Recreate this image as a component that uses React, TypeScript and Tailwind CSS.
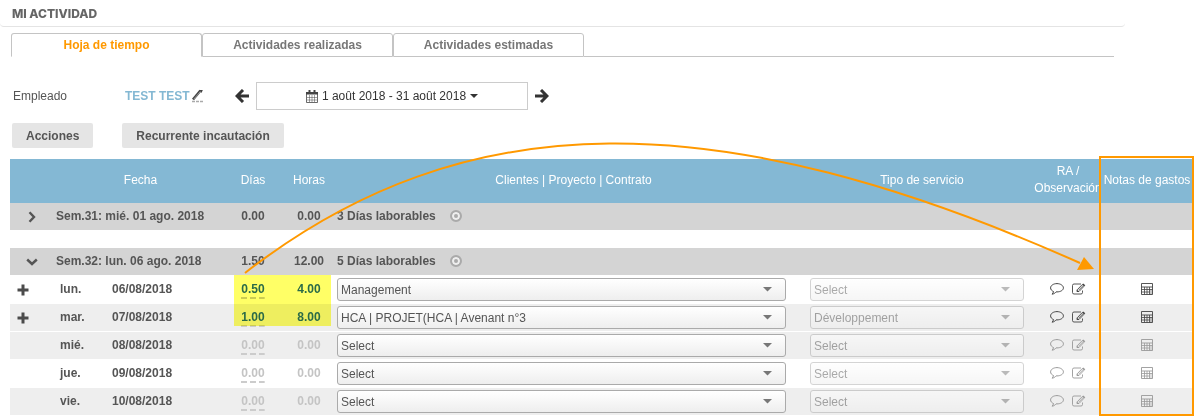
import React from 'react';

interface DayRow {
    day: string;
    date: string;
    days: string;
    hours: string;
    project: string;
    service: string;
    filled: boolean;
    striped: boolean;
}

const TABS = ['Hoja de tiempo', 'Actividades realizadas', 'Actividades estimadas'];

const DAYS: DayRow[] = [
    { day: 'lun.', date: '06/08/2018', days: '0.50', hours: '4.00', project: 'Management', service: 'Select', filled: true, striped: false },
    { day: 'mar.', date: '07/08/2018', days: '1.00', hours: '8.00', project: 'HCA | PROJET(HCA | Avenant n°3', service: 'Développement', filled: true, striped: true },
    { day: 'mié.', date: '08/08/2018', days: '0.00', hours: '0.00', project: 'Select', service: 'Select', filled: false, striped: true },
    { day: 'jue.', date: '09/08/2018', days: '0.00', hours: '0.00', project: 'Select', service: 'Select', filled: false, striped: false },
    { day: 'vie.', date: '10/08/2018', days: '0.00', hours: '0.00', project: 'Select', service: 'Select', filled: false, striped: true }
];

const CalendarIcon = () => (
    <svg width="12" height="13" viewBox="0 0 12 13" fill="none" stroke="#444" aria-hidden="true">
        <path d="M.5 2.5h11v10H.5z" strokeWidth=".8" />
        <path d="M0 2h12v2.500H0z" fill="#444" stroke="none" />
        <path d="M3.500 0v3.500M8.500 0v3.500" strokeWidth="2" />
        <path d="M3.500 5v7M6 5v7M8.500 5v7M1 7.500h10M1 10h10" strokeWidth=".5" />
    </svg>
);

const PencilIcon = () => (
    <svg width="12" height="14" viewBox="0 0 12 14" fill="none" aria-hidden="true">
        <path d="M1 10.500 8.500 1.500" stroke="#444" strokeWidth="2.600" />
        <path d="M1.800 10.200 8.800 2" stroke="#bbb" strokeWidth=".7" />
        <path d="M7.500 1 10.800 1 9.500 4z" fill="#444" />
        <path d="M0 12.500h11" stroke="#aaa" strokeWidth="1.500" strokeDasharray="3 1" />
    </svg>
);

const ArrowIcon = ({ flip = false }: { flip?: boolean }) => (
    <svg width="14" height="14" viewBox="0 0 14 14" fill="none" stroke="#333" strokeWidth="3" aria-hidden="true">
        {flip ? <path d="M0 7h11M6 1l6 6-6 6" /> : <path d="M14 7H3M8 1L2 7l6 6" />}
    </svg>
);

const CommentIcon = () => (
    <svg width="14" height="12" viewBox="0 0 14 12" fill="none" stroke="currentColor" aria-hidden="true">
        <path d="M7 .6C3.500.6.6 2.400.6 4.900c0 1.600 1.100 2.900 2.900 3.600-.1 1.100-.7 2-1.400 2.700 1.600-.2 3-1.100 3.900-2.300h1c3.500 0 6.400-1.700 6.400-4S10.500.6 7 .6z" />
    </svg>
);

const EditIcon = () => (
    <svg width="14" height="12" viewBox="0 0 14 12" fill="none" stroke="currentColor" aria-hidden="true">
        <path d="M9 1H2A1.500 1.500 0 0 0 .5 2.500v7A1.500 1.500 0 0 0 2 11h7a1.500 1.500 0 0 0 1.500-1.500V7.500" strokeWidth=".9" />
        <path d="M5.200 6.800 10.200 1.600 12 3.300 7 8.500H5.200z" strokeWidth=".9" />
        <path d="M11.200.4 13.300 2.200 12.300 3.300 10.200 1.400z M4.800 9V6.800L7 9z" fill="currentColor" stroke="none" />
        <path d="M6.500 7.300 10.800 2.900" strokeWidth=".8" />
    </svg>
);

const CalculatorIcon = () => (
    <svg width="12" height="12" viewBox="0 0 12 12" fill="none" stroke="currentColor" aria-hidden="true">
        <path d="M.5.5h11v11H.5z M.5 4h11" strokeWidth=".9" />
        <path d="M3.500 4v7.500M6 4v7.500M8.500 4v7.500M.5 6.500h11M.5 9h8" strokeWidth=".8" />
        <path d="M8.500 6.500h3v5h-3z" fill="currentColor" fillOpacity=".3" stroke="none" />
    </svg>
);

const PlusIcon = () => (
    <svg width="12" height="12" viewBox="0 0 12 12" aria-hidden="true">
        <path d="M6 .5v11M.5 6h11" stroke="#4b4b4b" strokeWidth="3" />
    </svg>
);

const ChevronIcon = ({ open }: { open: boolean }) => (
    <svg width="12" height="12" viewBox="0 0 12 12" fill="none" stroke="#555" strokeWidth="2.400" aria-hidden="true">
        {open ? <path d="M1.200 3.500 6 8l4.800-4.500" /> : <path d="M3.500 1.200 8 6l-4.500 4.800" />}
    </svg>
);

interface ComboProps {
    label: string;
    value: string;
    disabled?: boolean;
}

const Combo: React.FC<ComboProps> = ({ label, value, disabled = false }) => (
    <div className={`relative h-[23px] ${disabled ? 'w-[214px] opacity-50' : 'w-full'}`}>
        <select
            aria-label={label}
            disabled={disabled}
            defaultValue={value}
            className="block h-full w-full appearance-none rounded-[3px] border border-[#aaa] bg-linear-to-b from-white to-[#eee] pl-[3px] pr-8 font-normal text-[#555] opacity-100"
        >
            <option value={value}>{value}</option>
        </select>
        <svg className="pointer-events-none absolute right-[14px] top-[9px]" width="9" height="5" viewBox="0 0 9 5" aria-hidden="true">
            <path d="M0 0h9L4.500 4.500z" fill="#777" />
        </svg>
    </div>
);

interface WeekProps {
    label: string;
    days: string;
    hours: string;
    summary: string;
    open: boolean;
}

const WeekRow: React.FC<WeekProps> = ({ label, days, hours, summary, open }) => (
    <tr className="h-7 bg-[#d4d4d4] *:border-b *:border-white">
        <td className="pl-4">
            <button type="button" aria-label={label} aria-expanded={open} className="block">
                <ChevronIcon open={open} />
            </button>
        </td>
        <td colSpan={2} className="pb-0.5">{label}</td>
        <td className="pb-0.5 text-center">{days}</td>
        <td className="pb-0.5 text-center">{hours}</td>
        <td className="pb-0.5">
            <label className="flex items-center gap-3.5">
                {summary}
                <input
                    type="radio"
                    name={label}
                    defaultChecked
                    className="size-3 appearance-none rounded-full border-2 border-[#aaa] bg-[#aaa] shadow-[inset_0_0_0_2px_#eee]"
                />
            </label>
        </td>
        <td colSpan={3}></td>
    </tr>
);

export default function App() {
    return (
        <div className="bg-white font-['Liberation_Sans',Arial,sans-serif] text-xs font-bold text-[#555]">
            <h1 className="mr-[78px] h-[27px] rounded-b-sm border-b border-[#e4e4e4] pl-3 pt-1 font-['Inter',sans-serif] text-xs leading-5 font-extrabold text-[#666]">
                MI ACTIVIDAD
            </h1>

            {/* Tabs */}
            <div role="tablist" className="mt-1.5 ml-[11px] mr-[89px] flex h-6">
                {TABS.map((tab, i) => (
                    <button
                        key={tab}
                        type="button"
                        role="tab"
                        aria-selected={i === 0}
                        className={`w-[191px] rounded-t-[3px] border border-[#c4c4c4] ${i === 0 ? 'border-b-white text-[#ff9900]' : 'text-[#777]'}`}
                    >
                        {tab}
                    </button>
                ))}
                <div className="flex-1 border-b border-[#c4c4c4]"></div>
            </div>

            {/* Employee and period */}
            <div className="mt-[25px] ml-[13px] flex h-7 items-center">
                <span className="w-28 font-normal">Empleado</span>
                <a href="#" className="flex w-[110px] items-center gap-0.5 text-[#84b8d3]">
                    TEST TEST
                    <PencilIcon />
                </a>
                <button type="button" aria-label="Anterior" className="w-[21px]">
                    <ArrowIcon />
                </button>
                <button type="button" className="flex h-7 w-[272px] items-center justify-center gap-1 border border-[#ccc] font-normal text-[#333]">
                    <CalendarIcon />
                    1 août 2018 - 31 août 2018
                    <svg width="8" height="4" viewBox="0 0 8 4" aria-hidden="true">
                        <path d="M0 0h8L4 4z" fill="#333" />
                    </svg>
                </button>
                <button type="button" aria-label="Siguiente" className="ml-[7px]">
                    <ArrowIcon flip />
                </button>
            </div>

            <div className="mt-[13px] ml-3 flex gap-[29px]">
                <button type="button" className="h-[25px] rounded-[2px] bg-[#e5e5e5] px-3.5">Acciones</button>
                <button type="button" className="h-[25px] rounded-[2px] bg-[#e5e5e5] px-3.5">Recurrente incautación</button>
            </div>

            <div className="relative mt-[11px] mr-[11px] ml-2.5">
                <table className="w-full table-fixed border-separate border-spacing-0">
                    <colgroup>
                        <col className="w-[46px]" />
                        <col className="w-[52px]" />
                        <col className="w-[117px]" />
                        <col className="w-14" />
                        <col className="w-14" />
                        <col />
                        <col className="w-56" />
                        <col className="w-[68px]" />
                        <col className="w-[90px]" />
                    </colgroup>
                    <thead>
                        <tr className="h-11 bg-[#84b8d4] leading-[17px] text-white *:pb-0.5 *:font-normal">
                            <td></td>
                            <th colSpan={2}>Fecha</th>
                            <th>Días</th>
                            <th>Horas</th>
                            <th>Clientes | Proyecto | Contrato</th>
                            <th>Tipo de servicio</th>
                            <th>RA / Observación</th>
                            <th className="whitespace-nowrap">Notas de gastos</th>
                        </tr>
                    </thead>
                    <tbody>
                        <WeekRow label="Sem.31: mié. 01 ago. 2018" days="0.00" hours="0.00" summary="3 Días laborables" open={false} />
                        <tr className="h-[17px]"><td colSpan={9}></td></tr>
                        <WeekRow label="Sem.32: lun. 06 ago. 2018" days="1.50" hours="12.00" summary="5 Días laborables" open />
                        {DAYS.map(row => (
                            <tr key={row.date} className={`h-7 *:border-b *:border-white ${row.striped ? 'bg-[#eee]' : 'bg-white'}`}>
                                <td className="pl-[7px]">
                                    {row.filled && (
                                        <button type="button" aria-label={`Añadir ${row.date}`} className="block">
                                            <PlusIcon />
                                        </button>
                                    )}
                                </td>
                                <td className="pb-0.5 pl-1">{row.day}</td>
                                <td className="pb-0.5 pl-1">{row.date}</td>
                                <td className={`text-center ${row.filled ? 'text-[#2b6bb0]' : 'text-[#c4c4c4]'}`}>
                                    <button
                                        type="button"
                                        className="bg-[repeating-linear-gradient(to_right,#ccc_0_6px,transparent_6px_9px)] bg-[length:100%_2px] bg-bottom bg-no-repeat pb-0.5"
                                    >
                                        {row.days}
                                    </button>
                                </td>
                                <td className={`pb-0.5 text-center ${row.filled ? 'text-[#2b6bb0]' : 'text-[#c4c4c4]'}`}>{row.hours}</td>
                                <td className="pr-6">
                                    <Combo label={`Proyecto ${row.date}`} value={row.project} />
                                </td>
                                <td>
                                    <Combo label={`Tipo de servicio ${row.date}`} value={row.service} disabled />
                                </td>
                                <td className="pb-0.5">
                                    <div className={`flex items-center justify-center gap-2 ${row.filled ? 'text-[#444]' : 'text-[#999]'}`}>
                                        <button type="button" aria-label="Observación"><CommentIcon /></button>
                                        <button type="button" aria-label="Editar"><EditIcon /></button>
                                    </div>
                                </td>
                                <td className={`pb-0.5 ${row.filled ? 'text-[#444]' : 'text-[#999]'}`}>
                                    <button type="button" aria-label="Nota de gastos" className="mx-auto block">
                                        <CalculatorIcon />
                                    </button>
                                </td>
                            </tr>
                        ))}
                    </tbody>
                </table>

                {/* Annotations drawn over the table */}
                <div className="pointer-events-none absolute top-[116px] left-56 h-[51px] w-[97px] bg-[#ffff66] mix-blend-multiply"></div>
                <div className="pointer-events-none absolute -top-[3px] -right-0.5 bottom-0 w-[95px] border-2 border-[#ff9900]"></div>
                <svg
                    className="pointer-events-none absolute -top-5 left-[230px]"
                    width="860"
                    height="140"
                    viewBox="240 139 860 140"
                    fill="none"
                    aria-hidden="true"
                >
                    <path d="M245 273C465 102 718 102 1080 263" stroke="#ff9900" strokeWidth="2" />
                    <path d="M1084 257 1094 269 1077 270z" fill="#ff9900" />
                </svg>
            </div>
        </div>
    );
}
